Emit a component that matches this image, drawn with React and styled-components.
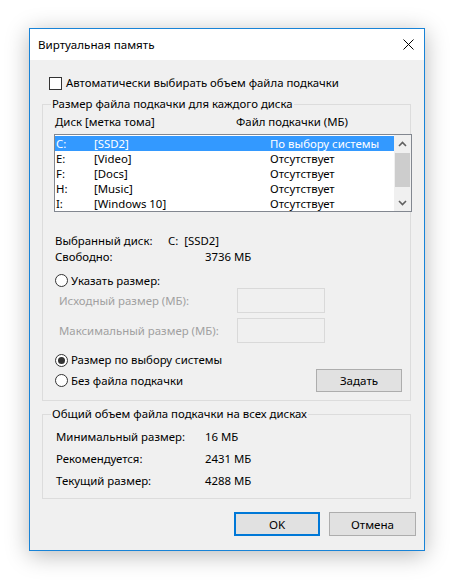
import styled, { createGlobalStyle } from "styled-components";

const GlobalStyle = createGlobalStyle`
  body {
    margin: 0;
    background: #ffffff;
    font-family: "Noto Sans", "Liberation Sans", sans-serif;
    font-size: 11.4px;
    color: #000000;
  }
`;

const Page = styled.div`
  padding: 28px 0 0 29px;
  height: 583px;
  box-sizing: border-box;
`;

const Window = styled.div`
  width: 396px;
  height: 523px;
  box-sizing: border-box;
  border: 1px solid #1883d7;
  background: #f0f0f0;
  box-shadow: 0 4px 22px rgba(0, 0, 0, 0.28);
  display: flex;
  flex-direction: column;
`;

const TitleBar = styled.div`
  height: 31px;
  flex-shrink: 0;
  background: #ffffff;
  display: flex;
  align-items: center;
  justify-content: space-between;
  padding: 0 10px 0 8px;
`;

const Title = styled.span`
  font-size: 11.6px;
`;

const Body = styled.div`
  flex: 1;
  display: flex;
  flex-direction: column;
  padding: 15px 13px 11px 12px;
`;

const CheckRow = styled.label`
  display: flex;
  align-items: center;
  gap: 4px;
  margin-left: 7px;
  line-height: 16px;
`;

const CheckBox = styled.span`
  width: 13px;
  height: 13px;
  box-sizing: border-box;
  border: 1px solid #333333;
  background: #ffffff;
`;

const Group = styled.fieldset`
  margin: 5px 0 0;
  padding: ${(p) => p.$pad};
  border: 1px solid #dcdcdc;
  min-width: 0;
  display: flex;
  flex-direction: column;
`;

const Legend = styled.legend`
  padding: 0 1px;
  margin-left: ${(p) => p.$shift}px;
  line-height: 16px;
`;

const HeaderRow = styled.div`
  display: grid;
  grid-template-columns: 181px 1fr;
  padding-left: 1px;
  line-height: 20px;
`;

const ListBox = styled.div`
  width: 358px;
  height: 78px;
  box-sizing: border-box;
  margin-top: 2px;
  border: 1px solid #828790;
  background: #ffffff;
  display: flex;
  overflow: hidden;
`;

const ListItems = styled.div`
  flex: 1;
  padding-top: 1px;
`;

const ListRow = styled.div`
  display: grid;
  grid-template-columns: 38px 176px 1fr;
  height: 15px;
  line-height: 15px;
  padding-left: 1px;
  overflow: hidden;
  background: ${(p) => (p.$selected ? "#3399ff" : "transparent")};
  color: ${(p) => (p.$selected ? "#ffffff" : "#000000")};
  white-space: nowrap;
`;

const ScrollBar = styled.div`
  width: 17px;
  background: #f0f0f0;
  display: flex;
  flex-direction: column;
  align-items: center;
`;

const ScrollArrow = styled.div`
  height: 17px;
  width: 17px;
  display: flex;
  align-items: center;
  justify-content: center;
`;

const Thumb = styled.div`
  width: 15px;
  height: 34px;
  margin-top: 1px;
  background: #cdcdcd;
`;

const Spacer = styled.div`
  flex: 1;
`;

const Info = styled.div`
  margin-top: 21px;
  display: flex;
  flex-direction: column;
`;

const InfoRow = styled.div`
  display: grid;
  grid-template-columns: 113px 1fr;
  padding-left: 1px;
  line-height: 16px;
  white-space: nowrap;
`;

const InfoValue = styled.span`
  padding-left: ${(p) => p.$indent || 0}px;
`;

const RadioRow = styled.label`
  display: flex;
  align-items: center;
  gap: 3px;
  padding-left: 1px;
  margin-top: ${(p) => p.$top || 0}px;
  line-height: ${(p) => p.$lh || 16}px;
`;

const Radio = styled.span`
  width: 13px;
  height: 13px;
  box-sizing: border-box;
  border-radius: 50%;
  border: 1px solid #333333;
  background: #ffffff;
  display: flex;
  align-items: center;
  justify-content: center;
  &::after {
    content: "";
    width: 7px;
    height: 7px;
    border-radius: 50%;
    background: ${(p) => (p.$checked ? "#333333" : "transparent")};
  }
`;

const FieldRow = styled.div`
  display: grid;
  grid-template-columns: 183px 88px;
  align-items: center;
  height: 25px;
  margin-top: ${(p) => p.$top || 0}px;
`;

const FieldLabel = styled.span`
  padding-left: 5px;
  color: #a0a0a0;
  white-space: nowrap;
`;

const FieldInput = styled.div`
  height: 25px;
  box-sizing: border-box;
  border: 1px solid #d9d9d9;
  background: #f0f0f0;
`;

const LastRow = styled.div`
  display: flex;
  align-items: center;
  justify-content: space-between;
  height: 23px;
  margin-top: 1px;
  margin-right: 1px;
`;

const Button = styled.button`
  width: ${(p) => p.$w || 86}px;
  height: ${(p) => p.$h || 24}px;
  box-sizing: border-box;
  border: ${(p) => (p.$default ? "2px solid #0078d7" : "1px solid #adadad")};
  background: #e1e1e1;
  font-family: inherit;
  font-size: 11.6px;
  color: #000000;
  padding: 0;
`;

const TotalRow = styled.div`
  display: grid;
  grid-template-columns: 149px 1fr;
  line-height: 22px;
  white-space: nowrap;
`;

const Buttons = styled.div`
  display: flex;
  justify-content: flex-end;
  gap: 9px;
  margin: 13px -5px 0 0;
`;

const disks = [
  ["C:", "[SSD2]", "По выбору системы"],
  ["E:", "[Video]", "Отсутствует"],
  ["F:", "[Docs]", "Отсутствует"],
  ["H:", "[Music]", "Отсутствует"],
  ["I:", "[Windows 10]", "Отсутствует"],
];

function Chevron({ up }) {
  return (
    <svg width="9" height="6" viewBox="0 0 9 6">
      <path
        d={up ? "M1 5 L4.5 1.5 L8 5" : "M1 1 L4.5 4.5 L8 1"}
        fill="none"
        stroke="#606060"
        strokeWidth="1.6"
      />
    </svg>
  );
}

export default function App() {
  return (
    <>
      <GlobalStyle />
      <Page>
        <Window>
          <TitleBar>
            <Title>Виртуальная память</Title>
            <svg width="11" height="11" viewBox="0 0 11 11">
              <path d="M0.5 0.5 L10.5 10.5 M10.5 0.5 L0.5 10.5" stroke="#000" strokeWidth="1" />
            </svg>
          </TitleBar>
          <Body>
            <CheckRow>
              <CheckBox />
              Автоматически выбирать объем файла подкачки
            </CheckRow>

            <Group $pad="0 7px 8px 11px">
              <Legend $shift={-3}>Размер файла подкачки для каждого диска</Legend>
              <HeaderRow>
                <span>Диск [метка тома]</span>
                <span>Файл подкачки (МБ)</span>
              </HeaderRow>
              <ListBox>
                <ListItems>
                  {disks.map((d, i) => (
                    <ListRow key={d[0]} $selected={i === 0}>
                      <span>{d[0]}</span>
                      <span>{d[1]}</span>
                      <span>{d[2]}</span>
                    </ListRow>
                  ))}
                </ListItems>
                <ScrollBar>
                  <ScrollArrow>
                    <Chevron up />
                  </ScrollArrow>
                  <Thumb />
                  <Spacer />
                  <ScrollArrow>
                    <Chevron />
                  </ScrollArrow>
                </ScrollBar>
              </ListBox>

              <Info>
                <InfoRow>
                  <span>Выбранный диск:</span>
                  <InfoValue>C:&nbsp; [SSD2]</InfoValue>
                </InfoRow>
                <InfoRow>
                  <span>Свободно:</span>
                  <InfoValue $indent={37}>3736 МБ</InfoValue>
                </InfoRow>
              </Info>

              <RadioRow $top={8} $lh={15}>
                <Radio />
                Указать размер:
              </RadioRow>
              <FieldRow>
                <FieldLabel>Исходный размер (МБ):</FieldLabel>
                <FieldInput />
              </FieldRow>
              <FieldRow $top={5}>
                <FieldLabel>Максимальный размер (МБ):</FieldLabel>
                <FieldInput />
              </FieldRow>
              <RadioRow $top={9}>
                <Radio $checked />
                Размер по выбору системы
              </RadioRow>
              <LastRow>
                <RadioRow>
                  <Radio />
                  Без файла подкачки
                </RadioRow>
                <Button $h={23}>Задать</Button>
              </LastRow>
            </Group>

            <Group $pad="4px 11px 6px 13px">
              <Legend $shift={-5}>Общий объем файла подкачки на всех дисках</Legend>
              <TotalRow>
                <span>Минимальный размер:</span>
                <span>16 МБ</span>
              </TotalRow>
              <TotalRow>
                <span>Рекомендуется:</span>
                <span>2431 МБ</span>
              </TotalRow>
              <TotalRow>
                <span>Текущий размер:</span>
                <span>4288 МБ</span>
              </TotalRow>
            </Group>

            <Buttons>
              <Button $default>OK</Button>
              <Button $w={87}>Отмена</Button>
            </Buttons>
          </Body>
        </Window>
      </Page>
    </>
  );
}
